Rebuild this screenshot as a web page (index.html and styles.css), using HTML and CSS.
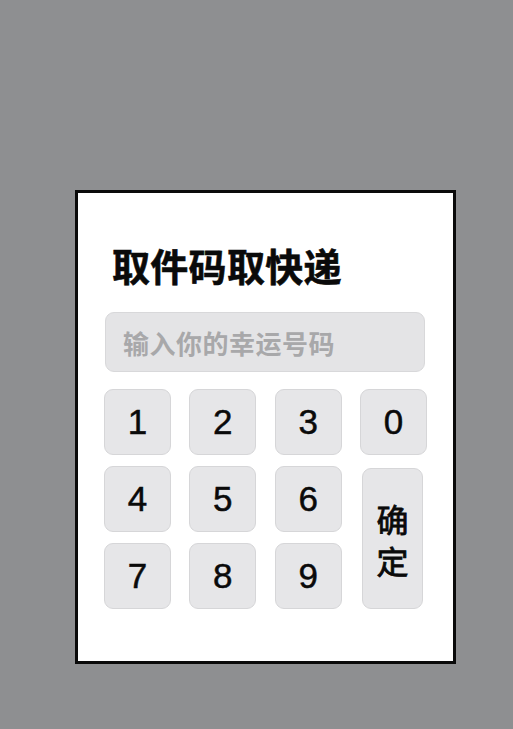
FILE: index.html
```html
<!DOCTYPE html>
<html>
<head>
    <meta charset="UTF-8">
    <meta name="viewport" content="width=device-width, initial-scale=1.0">
    <title>取件码取快递</title>
    <link rel="stylesheet" href="styles.css">
</head>
<body>
    <div class="card">
        <h1 class="title">取件码取快递</h1>

        <input class="code-input" type="text" placeholder="输入你的幸运号码">

        <div class="keypad">
            <button class="key">1</button>
            <button class="key">2</button>
            <button class="key">3</button>
            <button class="key">0</button>
            <button class="key">4</button>
            <button class="key">5</button>
            <button class="key">6</button>
            <button class="key confirm">确<br>定</button>
            <button class="key">7</button>
            <button class="key">8</button>
            <button class="key">9</button>
        </div>
    </div>
</body>
</html>
```

FILE: styles.css
```css
body {
    margin: 0;
    padding: 190px 0 0 75px;
    min-height: 100vh;
    box-sizing: border-box;
    background: #8e8f91;
    font-family: "Noto Sans CJK SC", sans-serif;
}

.card {
    width: 381px;
    height: 474px;
    box-sizing: border-box;
    padding: 53px 26px 0 26px;
    border: 3px solid #0a0a0a;
    background: #ffffff;
}

.title {
    margin: 0 0 28px 8px;
    font-size: 38px;
    line-height: 38px;
    font-weight: 700;
    letter-spacing: 0.3px;
    color: #0a0a0a;
    -webkit-text-stroke: 0.6px #0a0a0a;
}

.code-input {
    display: block;
    width: 320px;
    height: 60px;
    margin: 0 0 17px 1px;
    padding: 0 0 0 17px;
    box-sizing: border-box;
    border: 1px solid #d8d8da;
    border-radius: 9px;
    background: #e4e4e6;
    font-family: "Noto Sans CJK SC", sans-serif;
    font-size: 26px;
    font-weight: 700;
    letter-spacing: 0.5px;
    outline: none;
}

.code-input::placeholder {
    color: #a8a8aa;
}

.keypad {
    display: grid;
    grid-template-columns: repeat(4, 1fr);
    grid-template-rows: repeat(3, 66px);
    column-gap: 18.3px;
    row-gap: 11px;
}

.key {
    margin: 0;
    padding: 0;
    border: 1px solid #d6d6d8;
    border-radius: 9px;
    background: #e6e6e8;
    color: #0a0a0a;
    font-family: "Liberation Sans", Arial, sans-serif;
    font-size: 35px;
    -webkit-text-stroke: 0.5px #0a0a0a;
    cursor: pointer;
}

.key.confirm {
    grid-column: 4;
    grid-row: 2 / span 2;
    margin: 2px 4px 0 2px;
    font-family: "Noto Sans CJK SC", sans-serif;
    font-size: 32px;
    line-height: 42px;
    font-weight: 400;
    -webkit-text-stroke: 0.8px #0a0a0a;
}
```
